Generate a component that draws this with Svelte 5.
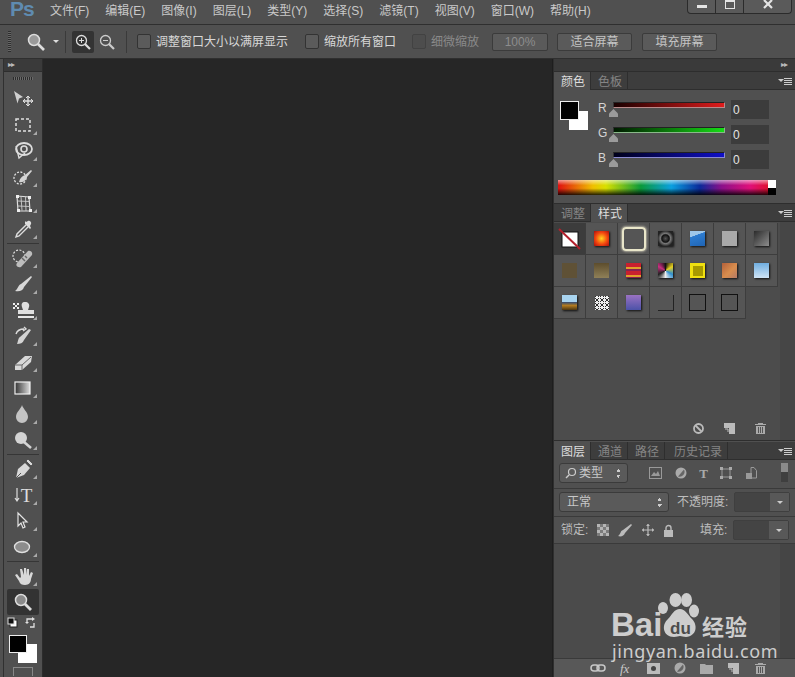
<script>
  const menus = ['文件(F)', '编辑(E)', '图像(I)', '图层(L)', '类型(Y)', '选择(S)', '滤镜(T)', '视图(V)', '窗口(W)', '帮助(H)'];

  const channels = [
    { name: 'R', from: '#1a0000', to: '#e01c1c', edge: '#b98a8a' },
    { name: 'G', from: '#001a00', to: '#16dc16', edge: '#8ab98a' },
    { name: 'B', from: '#00001a', to: '#1010c8', edge: '#8a8ad0' }
  ];

  const styles = [
    'none', 'radial-gradient(circle, #ffd21e 0, #f3470f 55%, #a80e0e 100%)', 'ring', 'radial-gradient(circle, #555 0, #111 35%, #777 48%, #222 75%)', 'linear-gradient(160deg, #9fc8ea 0 30%, #2d7cd0 32%, #1f64b4 100%)', '#a9a9a9', 'linear-gradient(135deg, #2b2b2b, #8d8d8d)',
    '#5f5136', 'linear-gradient(180deg, #5d4d2d, #8f8058)', 'repeating-linear-gradient(180deg, #c9202f 0 4px, #e0a02c 4px 6px, #8a2050 6px 8px)', 'conic-gradient(#111, #e8d020, #3090d0, #eee, #222, #c83080, #111)', 'linear-gradient(#a89a00, #a89a00) center / 10px 10px no-repeat, #f0e010', 'linear-gradient(135deg, #b4603a, #d88e4e 55%, #b57a66)', 'linear-gradient(180deg, #70aee0, #cfe4f6)',
    'linear-gradient(180deg, #a8d4f0 0 48%, #40506a 50%, #b07a20 70%, #4a3410)', 'noise', 'linear-gradient(180deg, #9a72c2, #4c52a8)', 'line', 'box', 'box'
  ];

  // speckle for the noise swatch
  const speckle = [];
  for (let y = 0; y < 14; y++) {
    for (let x = 0; x < 14; x++) {
      if ((x * 7 + y * 13 + x * y * 3) % 5 < 2) speckle.push({ x, y });
    }
  }
</script>

<div class="app">
  <header class="menubar">
    <span class="logo">Ps</span>
    <nav>
      {#each menus as m}<span>{m}</span>{/each}
    </nav>
    <div class="winctl">
      <span class="wbtn min"><i></i></span>
      <span class="wbtn max"><i></i></span>
      <span class="wbtn close">
        <svg width="10" height="9" viewBox="0 0 10 9"><path d="M1 0l8 8M9 0L1 8" stroke="#e4e4e4" stroke-width="2.2"/></svg>
      </span>
    </div>
  </header>

  <div class="options">
    <span class="grip"></span>
    <svg class="o-zoom" width="20" height="20" viewBox="0 0 20 20"><circle cx="8" cy="8" r="5.5" fill="#9a9a9a" stroke="#ddd" stroke-width="1.5"/><path d="M12 12l6 6" stroke="#ddd" stroke-width="2.6"/></svg>
    <span class="caret"></span>
    <span class="osep first"></span>
    <span class="ozbtn active">
      <svg width="18" height="18" viewBox="0 0 18 18"><circle cx="7.5" cy="7.5" r="5" fill="none" stroke="#ddd" stroke-width="1.3"/><path d="M11 11l5 5" stroke="#ddd" stroke-width="2.2"/><path d="M5 7.5h5M7.5 5v5" stroke="#ddd"/></svg>
    </span>
    <span class="ozbtn">
      <svg width="18" height="18" viewBox="0 0 18 18"><circle cx="7.5" cy="7.5" r="5" fill="none" stroke="#ccc" stroke-width="1.3"/><path d="M11 11l5 5" stroke="#ccc" stroke-width="2.2"/><path d="M5 7.5h5" stroke="#ccc"/></svg>
    </span>
    <span class="osep second"></span>
    <label class="chk c1"><i></i>调整窗口大小以满屏显示</label>
    <label class="chk c2"><i></i>缩放所有窗口</label>
    <label class="chk c3 dim"><i></i>细微缩放</label>
    <button class="obtn dim b1">100%</button>
    <button class="obtn b2">适合屏幕</button>
    <button class="obtn b3">填充屏幕</button>
  </div>

  <div class="work">
    <aside class="tools">
      <div class="strip"><span class="arrows">▸▸</span></div>
      <div class="toolgrip"></div>

      <div class="tool"><svg viewBox="0 0 24 20"><path d="M3 2l9 6-4 1.500-1.500 5z" fill="#cfcfcf"/><path d="M17 7v10M12 12h10" stroke="#ddd" stroke-width="1.400"/><path d="M15 9l2-2 2 2M15 15l2 2 2-2M14 10l-2 2 2 2M20 10l2 2-2 2" fill="none" stroke="#ddd"/></svg></div>
      <div class="tool corner"><svg viewBox="0 0 24 20"><rect x="5" y="4" width="14" height="12" fill="none" stroke="#e0e0e0" stroke-width="1.500" stroke-dasharray="3 2"/></svg></div>
      <div class="tool corner"><svg viewBox="0 0 24 20"><ellipse cx="13" cy="8" rx="8" ry="6" fill="none" stroke="#ddd" stroke-width="1.800"/><circle cx="13" cy="8" r="3" fill="none" stroke="#ddd" stroke-width="1.600"/><path d="M5 5l3 12 6-5" fill="none" stroke="#ddd" stroke-width="1.300"/></svg></div>
      <div class="tool corner"><svg viewBox="0 0 24 20"><circle cx="9" cy="11" r="6" fill="none" stroke="#ddd" stroke-dasharray="2 1.500" stroke-width="1.300"/><path d="M8 15c5 1 7-2 8-5l5-6-1-1-6 5c-3 1-5 3-6 7z" fill="#d4d4d4"/></svg></div>
      <div class="tool corner"><svg viewBox="0 0 24 20"><path d="M6 3l12 1 1 14H7z" fill="none" stroke="#ddd" stroke-width="1.200"/><path d="M10 3.500l1 14M14.500 4l.5 14M6.500 8l12 .5M7 13l12 .5" stroke="#ccc" stroke-width=".9"/><g fill="#eee"><rect x="5" y="2" width="3" height="3"/><rect x="17" y="3" width="3" height="3"/><rect x="6" y="16" width="3" height="3"/><rect x="18" y="16" width="3" height="3"/></g></svg></div>
      <div class="tool corner"><svg viewBox="0 0 24 20"><path d="M15 6L6 15l-1 3 3-1 9-9" fill="none" stroke="#ddd" stroke-width="1.400"/><path d="M14 5l5 5 1-1-1-2 1-2c1-2-2-4-3-3l-2 1-1-1z" fill="#dcdcdc"/></svg></div>
      <div class="tsep"></div>
      <div class="tool corner"><svg viewBox="0 0 24 22"><circle cx="8" cy="9" r="6" fill="none" stroke="#ddd" stroke-dasharray="2 1.500" stroke-width="1.200"/><path d="M6 16l11-12c2-1 5 1 4 4L10 20c-3 1-6-1-4-4z" fill="#bdbdbd"/><path d="M11 11l3 3M14 9l2 2" stroke="#666" stroke-width="1.500"/></svg></div>
      <div class="tool corner"><svg viewBox="0 0 24 20"><path d="M4 17c4 1 8 0 9-4l8-10-1-1-10 8c-3 1-3 5-6 7z" fill="#d8d8d8"/></svg></div>
      <div class="tool corner"><svg viewBox="0 0 24 20"><path d="M14 2c-3 0-4 2-3 5l1 3H7v4h16v-4h-6l1-3c1-3-1-5-4-5z" fill="#e0e0e0"/><rect x="7" y="16" width="16" height="2" fill="#e8e8e8"/><path d="M2 3h2v2H2zM6 3h2v2H6zM4 5h2v2H4zM2 7h2v2H2zM6 7h2v2H6z" fill="#eee"/></svg></div>
      <div class="tool corner"><svg viewBox="0 0 24 20"><path d="M6 18c3 0 6-1 7-4l7-10-2-1-9 8c-2 1-2 5-3 7z" fill="#d4d4d4"/><path d="M5 8c1-3 4-5 8-5M13 1l2 2-3 2" fill="none" stroke="#ddd" stroke-width="1.400"/></svg></div>
      <div class="tool corner"><svg viewBox="0 0 24 20"><path d="M4 13L14 4h7l-1 6-9 8H4z" fill="#d8d8d8"/><path d="M4 13h7v5M11 13l9-8" fill="none" stroke="#666"/></svg></div>
      <div class="tool corner"><svg viewBox="0 0 24 20"><defs><linearGradient id="gr"><stop offset="0" stop-color="#333"/><stop offset="1" stop-color="#ddd"/></linearGradient></defs><rect x="4" y="4" width="15" height="12" fill="url(#gr)" stroke="#f0f0f0" stroke-width="1.200"/></svg></div>
      <div class="tool corner"><svg viewBox="0 0 24 20"><path d="M11 1c1 4 6 7 6 12a6 6 0 0 1-12 0c0-5 5-8 6-12z" fill="#c4c4c4"/></svg></div>
      <div class="tool corner"><svg viewBox="0 0 24 20"><circle cx="10" cy="8" r="6" fill="#d4d4d4"/><path d="M13 12l7 6" stroke="#d4d4d4" stroke-width="2.600"/></svg></div>
      <div class="tsep"></div>
      <div class="tool corner"><svg viewBox="0 0 24 22"><path d="M5 20l2-9 7-6 5 5-6 7z" fill="#d8d8d8"/><path d="M15 3l2-2 5 5-2 2zM5 20l5-5" fill="#d8d8d8" stroke="#555"/></svg></div>
      <div class="tool type corner"><svg class="arr" viewBox="0 0 6 16"><path d="M3 1v13M1 11l2 3 2-3" fill="none" stroke="#ddd" stroke-width="1.200"/></svg><span>T</span></div>
      <div class="tool corner"><svg viewBox="0 0 24 20"><path d="M7 2v13l3-3 2 5 2-1-2-5h4z" fill="#444" stroke="#e4e4e4" stroke-width="1.200"/></svg></div>
      <div class="tool corner"><svg viewBox="0 0 24 20"><ellipse cx="11" cy="10" rx="7.500" ry="5.500" fill="#8c8c8c" stroke="#e0e0e0" stroke-width="1.300"/></svg></div>
      <div class="tsep"></div>
      <div class="tool corner"><svg viewBox="0 0 24 20"><path d="M4 9l4 6c1 3 3 4 6 4 4 0 6-3 6-6l2-6-2-1-2 4V3h-2v6l-1-7h-2v7L11 3H9l1 8-1 1-3-4z" fill="#d8d8d8"/></svg></div>
      <div class="tool on"><svg viewBox="0 0 24 20"><circle cx="10" cy="8" r="5.500" fill="#8a8a8a" stroke="#ddd" stroke-width="1.500"/><path d="M14 12l6 6" stroke="#ddd" stroke-width="2.800"/></svg></div>

      <div class="minicolors">
        <svg width="11" height="11" viewBox="0 0 11 11"><rect x="3" y="3" width="7" height="7" fill="#fff" stroke="#222"/><rect x="1" y="1" width="6" height="6" fill="#111" stroke="#ddd"/></svg>
        <svg width="12" height="12" viewBox="0 0 12 12"><path d="M2 5V2h5M9 6v4H5" fill="none" stroke="#e0e0e0" stroke-width="1.300"/><path d="M0 5h4L2 7zM7 0v4L10 2z" fill="#e0e0e0"/></svg>
      </div>
      <div class="fgbg"><span class="bg"></span><span class="fg"></span></div>
      <div class="qmask"></div>
    </aside>

    <main class="canvas"></main>

    <section class="panels">
      <div class="strip right"><span class="arrows">▸▸</span></div>

      <div class="tabs">
        <span class="tab cur">颜色</span><span class="tab">色板</span>
        <span class="pmenu"></span>
      </div>
      <div class="colorbody">
        <div class="swatches"><span class="bg"></span><span class="fg"></span></div>
        <div class="rows">
          {#each channels as c}
            <div class="rgb">
              <b>{c.name}</b>
              <div class="slider">
                <span class="track" style="background:linear-gradient(90deg,{c.from},{c.to});border-color:{c.edge}"></span>
                <span class="thumb"></span>
              </div>
              <span class="val">0</span>
            </div>
          {/each}
        </div>
        <div class="spectrum"><span class="bw"></span></div>
      </div>

      <div class="tabs">
        <span class="tab">调整</span><span class="tab cur">样式</span>
        <span class="pmenu"></span>
      </div>
      <div class="stylesbody">
        <div class="grid">
          {#each styles as s, i}
            <div class="cell" class:first={i === 0}>
              {#if s === 'none'}
                <svg width="24" height="24" viewBox="0 0 24 24"><rect x="4" y="5" width="16" height="15" fill="#fff" stroke="#111"/><path d="M1 2l21 20" stroke="#b3202c" stroke-width="2"/></svg>
              {:else if s === 'ring'}
                <span class="ring"></span>
              {:else if s === 'noise'}
                <svg width="14" height="14" viewBox="0 0 14 14"><rect width="14" height="14" fill="#eee"/>{#each speckle as p}<rect x={p.x} y={p.y} width="1" height="1" fill="#2c2c2c"/>{/each}</svg>
              {:else if s === 'line'}
                <span class="sw line"></span>
              {:else if s === 'box'}
                <span class="sw box"></span>
              {:else}
                <span class="sw" class:flat={i === 7 || i === 8} style="background:{s}"></span>
              {/if}
            </div>
          {/each}
        </div>
        <div class="stylefoot">
          <svg width="13" height="13" viewBox="0 0 13 13"><circle cx="6.500" cy="6.500" r="4.500" fill="none" stroke="#bbb" stroke-width="1.800"/><path d="M3.500 3.500l6 6" stroke="#bbb" stroke-width="1.800"/></svg>
          <svg width="13" height="13" viewBox="0 0 13 13"><path d="M1 1h11v11H6V6H1z" fill="#bbb"/><path d="M2 7h3v3" fill="none" stroke="#bbb"/></svg>
          <svg width="13" height="13" viewBox="0 0 13 13"><path d="M4 1h5v1h3v1H1V2h3zM2 4h9v8H2z" fill="#aaa"/><path d="M4.500 5v6M6.500 5v6M8.500 5v6" stroke="#555"/></svg>
        </div>
      </div>

      <div class="tabs layers-tabs">
        <span class="tab cur">图层</span><span class="tab">通道</span><span class="tab">路径</span><span class="tab">历史记录</span>
        <span class="pmenu"></span>
      </div>
      <div class="layerbody">
        <div class="lrow filter">
          <span class="sel kind">
            <svg width="12" height="12" viewBox="0 0 12 12"><circle cx="7" cy="5" r="3.500" fill="none" stroke="#ccc" stroke-width="1.200"/><path d="M4 8L1 11" stroke="#ccc" stroke-width="1.500"/></svg>
            类型<i class="updown"></i>
          </span>
          <div class="licons">
            <svg width="13" height="12" viewBox="0 0 13 12"><rect x=".5" y=".5" width="12" height="11" fill="none" stroke="#999"/><path d="M2 9l3-4 2 2 2-3 2 5z" fill="#999"/></svg>
            <svg width="12" height="12" viewBox="0 0 12 12"><circle cx="6" cy="6" r="5.500" fill="#aaa"/><path d="M3 9.500L9 2.500A5 5 0 0 1 3 9.500z" fill="#666"/></svg>
            <span class="tt">T</span>
            <svg width="12" height="12" viewBox="0 0 12 12"><rect x="2" y="2" width="8" height="8" fill="none" stroke="#999"/><path d="M0 0h3v3H0zM9 0h3v3H9zM0 9h3v3H0zM9 9h3v3H9z" fill="#aaa"/></svg>
            <svg width="12" height="13" viewBox="0 0 12 13"><path d="M6 .5h3l2.500 3V11H6z" fill="none" stroke="#999"/><rect x="1" y="6" width="6" height="6" fill="#999"/></svg>
          </div>
          <span class="toggle"></span>
        </div>
        <div class="lrow blend">
          <span class="sel mode">正常<i class="updown"></i></span>
          <span class="lab">不透明度:</span>
          <span class="num"><i></i></span>
        </div>
        <div class="lrow lock">
          <span class="lab">锁定:</span>
          <div class="lockicons">
            <svg width="12" height="12" viewBox="0 0 4 4"><rect width="4" height="4" fill="#7c7c7c"/><path d="M0 0h1v1H0zM2 0h1v1H2zM1 1h1v1H1zM3 1h1v1H3zM0 2h1v1H0zM2 2h1v1H2zM1 3h1v1H1zM3 3h1v1H3z" fill="#b5b5b5"/></svg>
            <svg width="16" height="14" viewBox="0 0 16 14"><path d="M1 13c3 1 6 0 7-3l7-8-1-1-8 6c-3 1-2 4-5 6z" fill="#bbb"/></svg>
            <svg width="14" height="14" viewBox="0 0 14 14"><path d="M7 1v12M1 7h12" stroke="#bbb" stroke-width="1.200"/><path d="M5 3l2-2 2 2zM5 11l2 2 2-2zM3 5L1 7l2 2zM11 5l2 2-2 2z" fill="#bbb"/></svg>
            <svg width="11" height="13" viewBox="0 0 11 13"><path d="M3 6V4a2.500 2.500 0 0 1 5 0v2" fill="none" stroke="#bbb" stroke-width="1.400"/><rect x="1" y="6" width="9" height="7" fill="#bbb"/></svg>
          </div>
          <span class="lab fill">填充:</span>
          <span class="num"><i></i></span>
        </div>
        <div class="llist"></div>
        <div class="lfoot">
          <svg width="16" height="10" viewBox="0 0 16 10"><rect x="1" y="2" width="8" height="6" rx="3" fill="none" stroke="#c8c8c8" stroke-width="1.500"/><rect x="7" y="2" width="8" height="6" rx="3" fill="none" stroke="#c8c8c8" stroke-width="1.500"/></svg>
          <em>fx</em>
          <svg width="13" height="11" viewBox="0 0 13 11"><rect width="13" height="11" fill="#bbb"/><circle cx="6.500" cy="5.500" r="2.500" fill="#444"/></svg>
          <svg width="12" height="12" viewBox="0 0 12 12"><circle cx="6" cy="6" r="5.500" fill="#aaa"/><path d="M3 9.500L9 2.500A5 5 0 0 1 3 9.500z" fill="#666"/></svg>
          <svg width="13" height="11" viewBox="0 0 13 11"><path d="M0 1h5l1 1h7v9H0z" fill="#aaa"/></svg>
          <svg width="13" height="13" viewBox="0 0 13 13"><path d="M1 1h11v11H6V6H1z" fill="#bbb"/><path d="M2 7h3v3" fill="none" stroke="#bbb"/></svg>
          <svg width="13" height="13" viewBox="0 0 13 13"><path d="M4 1h5v1h3v1H1V2h3zM2 4h9v8H2z" fill="#aaa"/><path d="M4.500 5v6M6.500 5v6M8.500 5v6" stroke="#555"/></svg>
        </div>
      </div>
    </section>
  </div>

  <div class="watermark">
    <svg class="paw" width="42" height="46" viewBox="0 0 42 46">
      <g fill="#cdcdcd">
        <ellipse cx="5" cy="16" rx="5" ry="6"/><ellipse cx="17.500" cy="8" rx="6" ry="7"/><ellipse cx="28.500" cy="8" rx="5.500" ry="7"/><ellipse cx="36" cy="19" rx="5" ry="6.500"/>
        <path d="M22 17c5 0 8 6 12 10 6 6 5 17-6 18-3 0-4-1-6-1s-3 1-6 1C5 45 3 33 10 27c4-4 6-10 12-10z"/>
      </g>
    </svg>
    <div class="wline"><span class="bai">Bai</span><span class="du">du</span><span class="jy">经验</span></div>
    <div class="url">jingyan.baidu.com</div>
  </div>
</div>

<style>
  :global(body) {
    margin: 0;
    background: #505050;
  }

  .app {
    position: relative;
    width: 795px;
    height: 677px;
    overflow: hidden;
    display: flex;
    flex-direction: column;
    background: #505050;
    color: #d2d2d2;
    font: 12px/1 "Liberation Sans", "Noto Sans CJK SC", sans-serif;
  }

  .menubar {
    height: 25px;
    flex: none;
    display: flex;
    align-items: flex-start;
    box-sizing: border-box;
    border-bottom: 1px solid #2f2f2f;
    padding-left: 10px;
  }
  .logo {
    font: bold 21px/18px "Liberation Sans", sans-serif;
    color: #5f8bb0;
    width: 40px;
    letter-spacing: -1px;
  }
  nav {
    display: flex;
    gap: 16px;
    padding-top: 4px;
    font-size: 12px;
    line-height: 14px;
    color: #c9c9c9;
    white-space: nowrap;
  }
  .winctl {
    margin-left: auto;
    margin-right: 3px;
    display: flex;
    height: 13px;
    border: 1px solid #2b2b2b;
    border-top: 0;
    border-radius: 0 0 4px 4px;
    background: #5a5a5a;
  }
  .wbtn {
    display: flex;
    align-items: flex-start;
    justify-content: center;
    width: 27px;
    border-right: 1px solid #2b2b2b;
  }
  .wbtn.close {
    width: 47px;
    border: 0;
  }
  .wbtn.min i {
    width: 10px;
    height: 3px;
    margin-top: 5px;
    background: #e4e4e4;
  }
  .wbtn.max i {
    width: 8px;
    height: 6px;
    border: 1px solid #e4e4e4;
    border-top-width: 2px;
  }

  .options {
    height: 34px;
    flex: none;
    display: flex;
    align-items: center;
    box-sizing: border-box;
    border-bottom: 1px solid #2f2f2f;
  }
  .grip {
    width: 3px;
    height: 21px;
    margin-left: 8px;
    background: repeating-linear-gradient(180deg, #2e2e2e 0 1px, #666 1px 2px);
  }
  .o-zoom { margin-left: 15px; }
  .caret {
    margin-left: 7px;
    border: 3px solid transparent;
    border-top: 3px solid #ddd;
    border-bottom: 0;
  }
  .osep {
    width: 1px;
    height: 22px;
    background: #3a3a3a;
  }
  .osep.first { margin: 0 6px 0 6px; }
  .osep.second { margin: 0 10px 0 6px; }
  .ozbtn {
    width: 22px;
    height: 22px;
    display: flex;
    align-items: center;
    justify-content: center;
    margin-right: 2px;
  }
  .ozbtn.active {
    background: #333;
    border-radius: 2px;
  }
  .chk {
    display: flex;
    align-items: center;
    gap: 5px;
    white-space: nowrap;
    color: #d8d8d8;
  }
  .chk i {
    width: 12px;
    height: 13px;
    background: #5b5b5b;
    border: 1px solid #333;
    border-radius: 2px;
  }
  .chk.c2 { margin-left: 17px; }
  .chk.c3 { margin-left: 16px; }
  .chk.dim { color: #8a8a8a; }
  .chk.dim i {
    background: #4d4d4d;
    border-color: #424242;
  }
  .obtn {
    height: 18px;
    padding: 0;
    background: #5a5a5a;
    border: 1px solid #3b3b3b;
    border-radius: 2px;
    color: #c4c4c4;
    font: 12px/1 "Liberation Sans", "Noto Sans CJK SC", sans-serif;
    text-align: center;
  }
  .obtn.dim { color: #8d8d8d; }
  .b1 { width: 56px; margin-left: 13px; }
  .b2 { width: 75px; margin-left: 9px; }
  .b3 { width: 75px; margin-left: 10px; }

  .work {
    flex: 1;
    display: flex;
    min-height: 0;
  }

  .strip {
    height: 13px;
    box-sizing: border-box;
    background: #3a3a3a;
    border-bottom: 1px solid #2d2d2d;
    display: flex;
    align-items: center;
  }
  .strip.right { justify-content: flex-end; padding-right: 4px; }
  .arrows {
    font-size: 8px;
    letter-spacing: -1px;
    color: #bbb;
    padding: 0 4px;
  }

  .tools {
    width: 38px;
    flex: none;
    margin-left: 3px;
    border-left: 1px solid #303030;
    border-right: 1px solid #2c2c2c;
    box-sizing: content-box;
  }
  .toolgrip {
    height: 3px;
    margin: 5px 9px 6px;
    background: repeating-linear-gradient(90deg, #2c2c2c 0 1px, #6a6a6a 1px 2px);
  }
  .tool {
    position: relative;
    height: 26px;
    display: flex;
    align-items: center;
    justify-content: center;
  }
  .tool svg {
    width: 24px;
    height: 22px;
  }
  .tool.corner::after {
    content: "";
    position: absolute;
    right: 5px;
    bottom: 3px;
    border: 2px solid transparent;
    border-right-color: #aaa;
    border-bottom-color: #aaa;
  }
  .tool.type { gap: 1px; }
  .tool.type svg.arr { width: 6px; height: 16px; }
  .tool.type span {
    font: 19px/1 "Liberation Serif", serif;
    color: #dcdcdc;
  }
  .tool.on {
    margin: 0 3px;
    background: #333;
    border-radius: 2px;
  }
  .tsep {
    height: 1px;
    margin: 1px 3px;
    background: #363636;
  }
  .minicolors {
    display: flex;
    justify-content: space-between;
    padding: 2px 5px 0 3px;
    height: 15px;
  }
  .fgbg, .swatches {
    position: relative;
  }
  .fgbg {
    width: 30px;
    height: 30px;
    margin-left: 3px;
  }
  .fg, .bg {
    position: absolute;
    box-sizing: border-box;
    background: #fff;
  }
  .fgbg .bg { left: 11px; top: 12px; width: 19px; height: 19px; }
  .fgbg .fg { left: 2px; top: 3px; width: 18px; height: 18px; background: #000; border: 1px solid #eee; }
  .qmask {
    height: 8px;
    margin: 5px 9px 0;
    border: 1px solid #888;
    border-bottom: 0;
  }

  .canvas {
    flex: 1;
    background: #262626;
    border-right: 1px solid #1e1e1e;
  }

  .panels {
    width: 241px;
    flex: none;
    display: flex;
    flex-direction: column;
    border-left: 1px solid #2f2f2f;
    box-sizing: content-box;
  }

  .tabs {
    position: relative;
    flex: none;
    height: 18px;
    box-sizing: border-box;
    display: flex;
    background: #3d3d3d;
    border-bottom: 1px solid #2e2e2e;
    font-size: 12px;
    color: #858585;
  }
  .tab {
    display: flex;
    align-items: center;
    padding: 2px 5px 0 7px;
    border-right: 1px solid #2e2e2e;
  }
  .tab.cur {
    background: #505050;
    color: #dedede;
    margin-bottom: -1px;
  }
  .layers-tabs .tab:nth-child(4) { padding-left: 9px; }
  .pmenu {
    position: absolute;
    right: 3px;
    top: 6px;
    width: 8px;
    height: 7px;
    background: repeating-linear-gradient(180deg, #ccc 0 1px, transparent 1px 2px);
  }
  .pmenu::before {
    content: "";
    position: absolute;
    left: -6px;
    top: 1px;
    border: 3px solid transparent;
    border-top-color: #ccc;
    border-bottom: 0;
  }

  .colorbody {
    position: relative;
    height: 114px;
    flex: none;
    box-sizing: border-box;
    border-bottom: 1px solid #2e2e2e;
    padding: 10px 0 0 44px;
  }
  .swatches {
    position: absolute;
    left: 6px;
    top: 11px;
  }
  .swatches .bg { left: 9px; top: 10px; width: 19px; height: 19px; }
  .swatches .fg { left: 0; top: 0; width: 19px; height: 19px; background: #000; border: 1px solid #eee; }
  .rows {
    display: flex;
    flex-direction: column;
  }
  .rgb {
    height: 25px;
    display: flex;
    align-items: flex-start;
  }
  .rgb b {
    width: 15px;
    font-weight: normal;
    font-size: 12px;
    color: #d4d4d4;
    padding-top: 2px;
  }
  .slider {
    width: 112px;
    height: 20px;
    position: relative;
  }
  .track {
    display: block;
    box-sizing: border-box;
    height: 6px;
    margin-top: 2px;
    border: 1px solid;
    border-top-color: #222 !important;
    border-left-color: #333 !important;
  }
  .thumb {
    position: absolute;
    left: -4px;
    top: 9px;
    width: 9px;
    height: 8px;
    background: #9b9b9b;
    clip-path: polygon(50% 0, 100% 55%, 100% 100%, 0 100%, 0 55%);
  }
  .val {
    width: 38px;
    height: 19px;
    margin-left: 6px;
    box-sizing: border-box;
    background: #3c3c3c;
    color: #e4e4e4;
    padding: 4px 0 0 2px;
    font-size: 12px;
  }
  .spectrum {
    position: relative;
    margin: 5px 0 0 -40px;
    width: 218px;
    height: 15px;
    background:
      linear-gradient(180deg, rgba(255,255,255,.55) 0, rgba(255,255,255,0) 35%, rgba(0,0,0,0) 55%, rgba(0,0,0,.85) 100%),
      linear-gradient(90deg, #e01010 0, #f0c000 16%, #d8e000 22%, #0a9a3a 38%, #0aa0e0 52%, #0a2a9a 65%, #8a108a 75%, #e0107a 88%, #e01010 100%);
  }
  .bw {
    position: absolute;
    right: 0;
    top: 0;
    width: 8px;
    height: 15px;
    background: linear-gradient(180deg, #fff 50%, #000 50%);
  }

  .stylesbody {
    height: 219px;
    flex: none;
    display: flex;
    flex-direction: column;
    padding-top: 1px;
    border-bottom: 1px solid #2e2e2e;
    box-sizing: border-box;
    background: linear-gradient(90deg, #4c4c4c 226px, #464646 226px);
  }
  .grid {
    width: 224px;
    display: grid;
    grid-template-columns: repeat(7, 32px);
    grid-auto-rows: 32px;
  }
  .cell {
    display: flex;
    align-items: center;
    justify-content: center;
    box-sizing: border-box;
    border-right: 1px solid #3d3d3d;
    border-bottom: 1px solid #3d3d3d;
    background: #555;
  }
  .cell.first { background: #3c3c3c; }
  .sw {
    width: 15px;
    height: 15px;
    box-shadow: 1px 1px 2px #111;
  }
  .sw.flat { box-shadow: none; }
  .sw.line {
    border-right: 1px solid #222;
    border-bottom: 1px solid #222;
    box-shadow: none;
  }
  .sw.box {
    border: 1px solid #111;
    box-shadow: none;
  }
  .ring {
    width: 20px;
    height: 20px;
    border: 2px solid #e9e6c9;
    border-radius: 4px;
    box-shadow: 0 0 2px 1px #aaa79a;
  }
  .stylefoot {
    margin-top: auto;
    margin-bottom: 3px;
    height: 17px;
    display: flex;
    align-items: center;
    gap: 18px;
    justify-content: flex-end;
    padding-right: 28px;
  }

  .layers-tabs { margin-top: 1px; }
  .layerbody {
    flex: 1;
    display: flex;
    flex-direction: column;
    min-height: 0;
  }
  .lrow {
    flex: none;
    display: flex;
    align-items: flex-start;
    box-sizing: border-box;
    border-bottom: 1px solid #3a3a3a;
    padding: 3px 0 0 5px;
    height: 28px;
  }
  .lrow.filter { height: 29px; }
  .lrow.lock { height: 27px; }
  .sel {
    position: relative;
    display: flex;
    align-items: center;
    gap: 2px;
    box-sizing: border-box;
    height: 20px;
    background: #5a5a5a;
    border: 1px solid #3b3b3b;
    border-radius: 3px;
    color: #c8c8c8;
    padding-left: 5px;
  }
  .sel.kind { width: 69px; }
  .sel.mode { width: 110px; padding-left: 7px; }
  .updown {
    position: absolute;
    right: 6px;
    top: 5px;
    width: 5px;
    height: 9px;
    background:
      linear-gradient(135deg, transparent 50%, #ccc 50%) 0 0 / 3px 3px no-repeat,
      linear-gradient(225deg, transparent 50%, #ccc 50%) 2px 0 / 3px 3px no-repeat,
      linear-gradient(45deg, transparent 50%, #ccc 50%) 0 6px / 3px 3px no-repeat,
      linear-gradient(315deg, transparent 50%, #ccc 50%) 2px 6px / 3px 3px no-repeat;
  }
  .licons {
    display: flex;
    align-items: center;
    height: 20px;
    gap: 12.6px;
    margin-left: 21px;
  }
  .tt {
    font: bold 13px/1 "Liberation Serif", serif;
    color: #aaa;
  }
  .toggle {
    width: 7px;
    height: 19px;
    margin-left: 24px;
    background: linear-gradient(180deg, #8a8a8a 50%, #3f3f3f 50%);
  }
  .lab {
    color: #bdbdbd;
    white-space: nowrap;
    line-height: 20px;
  }
  .blend .lab { margin-left: 8px; width: 57px; }
  .lock .lab { margin-left: 2px; width: 30px; }
  .lock .lab.fill { margin-left: 0; width: 33px; }
  .lockicons {
    display: flex;
    align-items: center;
    height: 20px;
    gap: 8px;
    width: 109px;
    padding-left: 6px;
    box-sizing: border-box;
  }
  .num {
    display: flex;
    justify-content: flex-end;
    width: 56px;
    height: 20px;
    box-sizing: border-box;
    background: #444;
    border: 1px solid #3f3f3f;
    border-radius: 2px;
  }
  .num i {
    position: relative;
    width: 19px;
    background: #585858;
  }
  .num i::after {
    content: "";
    position: absolute;
    left: 7px;
    top: 8px;
    border: 3px solid transparent;
    border-top-color: #ccc;
    border-bottom: 0;
  }
  .llist {
    flex: 1;
    background: linear-gradient(90deg, #4b4b4b 226px, #454545 226px);
  }
  .lfoot {
    height: 18px;
    flex: none;
    display: flex;
    align-items: center;
    gap: 14px;
    padding-left: 36px;
    background: #585858;
    border-top: 1px solid #3a3a3a;
  }
  .lfoot em {
    font: italic 13px/1 "Liberation Serif", serif;
    color: #c8c8c8;
    width: 13px;
  }

  .watermark {
    position: absolute;
    left: 611px;
    top: 592px;
    width: 142px;
    height: 68px;
    color: #cdcdcd;
  }
  .paw {
    position: absolute;
    left: 47px;
    top: 0;
  }
  .wline {
    position: absolute;
    left: 0;
    top: 17px;
    display: flex;
    align-items: center;
    height: 32px;
  }
  .bai {
    width: 53px;
    font: bold 33px/32px "Liberation Sans", sans-serif;
  }
  .du {
    position: relative;
    width: 33px;
    text-align: center;
    font: bold 17px/1 "Liberation Sans", sans-serif;
    color: #4c4c4c;
    margin-top: 6px;
  }
  .jy {
    font: bold 22px/1 "Noto Sans CJK SC", sans-serif;
    letter-spacing: 1px;
    margin-left: 5px;
  }
  .url {
    position: absolute;
    left: 1px;
    top: 50px;
    font: 18px/18px "Noto Sans", sans-serif;
    letter-spacing: .6px;
    white-space: nowrap;
  }
</style>
